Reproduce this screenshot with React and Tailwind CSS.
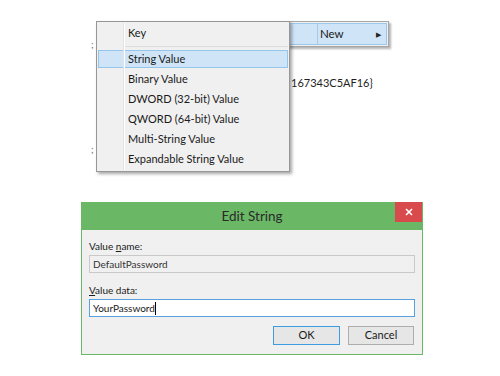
import React from 'react';

const font = { fontFamily: 'Lato, "Noto Sans", sans-serif' };

const items = [
  'Binary Value',
  'DWORD (32-bit) Value',
  'QWORD (64-bit) Value',
  'Multi-String Value',
  'Expandable String Value',
];

// Context menu with the "New" submenu opened to the left
const RegistryMenu = () => (
  <div className="relative h-[200px]">
    {/* registry listing behind the menu */}
    <span className="absolute left-[91px] top-[37px] text-[10px] text-gray-500">;</span>
    <span className="absolute left-[91px] top-[142px] text-[10px] text-gray-500">;</span>
    <span className="absolute left-[291px] top-[75px] text-[11px] text-[#1e1e1e] whitespace-nowrap">
      167343C5AF16{'}'}
    </span>

    {/* parent menu, "New" highlighted */}
    <div className="absolute left-[200px] top-[21px] w-[189px] h-[26px] border border-[#a7a7a7] bg-[#f0f0f0] shadow-[2px_2px_2px_rgba(0,0,0,0.3)] p-px">
      <div className="relative h-full bg-[#cfe4f6] border border-[#9cc8ec] flex items-center">
        <div className="absolute left-[114px] top-0 bottom-0 w-px bg-[#a9cbe6]" />
        <span className="ml-[117px] text-[11.5px] text-[#1a1a1a]">New</span>
        <span className="ml-auto mr-[5px] text-[7px] text-[#222]">▶</span>
      </div>
    </div>

    {/* submenu */}
    <div className="absolute left-[96px] top-[21px] w-[194px] border border-[#979797] bg-[#f0f0f0] shadow-[2px_2px_3px_rgba(0,0,0,0.35)] pt-px pb-[2px] px-px text-[11px] text-[#1a1a1a]">
      <div className="absolute left-[26px] top-px bottom-px w-px bg-[#e2e3e3]" />
      <div className="absolute left-[27px] top-px bottom-px w-px bg-white" />
      <div className="h-[20px] flex items-center pl-[30px]">Key</div>
      <div className="h-[6px] flex items-center pl-[27px]">
        <div className="h-px w-full bg-[#dcdcdc]" />
      </div>
      <div className="h-[20px] py-px">
        <div className="h-full bg-[#cfe4f6] border border-[#94c5ea] flex items-center pl-[29px]">
          String Value
        </div>
      </div>
      {items.map((t) => (
        <div key={t} className="h-[20px] flex items-center pl-[30px] whitespace-nowrap">
          {t}
        </div>
      ))}
    </div>
  </div>
);

const EditString = () => (
  <div className="ml-[81px] mt-[2px] w-[342px] border border-[#6ab866] border-t-0 bg-[#f0f0f0]">
    <div className="relative h-[28px] bg-[#6ab866] flex items-center justify-center">
      <span className="text-[13.5px] text-[#2b2b2b]">Edit String</span>
      <div className="absolute right-0 top-0 w-[27px] h-[20px] bg-[#d94a4c] flex items-center justify-center">
        <svg width="8" height="8" viewBox="0 0 8 8">
          <path d="M1 1L7 7M7 1L1 7" stroke="white" strokeWidth="1.6" />
        </svg>
      </div>
    </div>
    <div className="px-[7px] pt-[8px] pb-[9px] text-[10px] text-[#1a1a1a]">
      <div className="h-[16px] leading-[16px]">
        Value <span className="underline">n</span>ame:
      </div>
      <div className="mt-px h-[18px] border border-[#c9c9c9] bg-[#f0f0f0] flex items-center pl-[3px] text-[#333]">
        DefaultPassword
      </div>
      <div className="mt-[9px] h-[16px] leading-[16px]">
        <span className="underline">V</span>alue data:
      </div>
      <div className="mt-px h-[18px] border border-[#5a9fe0] bg-white flex items-center pl-[3px]">
        YourPassword<span className="w-px h-[13px] bg-black" />
      </div>
      <div className="mt-[9px] flex justify-end gap-[8px] pr-px">
        <button className="w-[67px] h-[19px] border border-[#3c9de2] bg-[#e6e6e6] text-[11px] text-[#1a1a1a]">OK</button>
        <button className="w-[66px] h-[19px] border border-[#adadad] bg-[#e6e6e6] text-[11px] text-[#1a1a1a]">Cancel</button>
      </div>
    </div>
  </div>
);

export default function App() {
  return (
    <div className="w-[500px] h-[376px] bg-white overflow-hidden" style={font}>
      <RegistryMenu />
      <EditString />
    </div>
  );
}
